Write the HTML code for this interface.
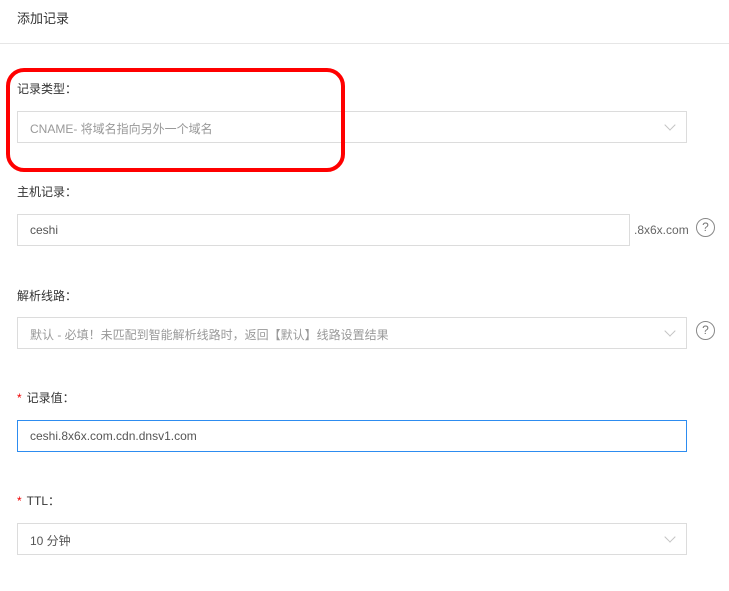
<!DOCTYPE html>
<html><head><meta charset="utf-8"><style>
body{margin:0;width:729px;height:591px;background:#fff;font-family:"Liberation Sans","Noto Sans CJK SC",sans-serif;font-size:12px;color:#333;position:relative;overflow:hidden}
.a{position:absolute}
.box{position:absolute;left:17px;width:668px;height:30px;border:1px solid #dcdcdc;background:#fff}
.box span{position:absolute;left:12px;top:8px;color:#999}
.lbl{position:absolute;left:17px}
.chev{position:absolute;right:12px;top:9px;width:7px;height:7px;border-right:1px solid #c4c4c4;border-bottom:1px solid #c4c4c4;transform:rotate(45deg)}
.q{position:absolute;width:17px;height:17px;border:1.2px solid #888;border-radius:50%;color:#777;font-size:12px;text-align:center;line-height:17px}
.req{color:#e00;margin-right:5px}
</style></head><body>
<div class="a" style="left:17px;top:8px;font-size:13px">添加记录</div>
<div class="a" style="left:0;top:43px;width:729px;height:1px;background:#e6e6e6"></div>

<div class="lbl" style="top:80px">记录类型：</div>
<div class="box" style="top:111px"><span>CNAME- 将域名指向另外一个域名</span><div class="chev"></div></div>
<div class="a" style="left:6px;top:68px;width:331px;height:96px;border:4px solid #f00;border-radius:18px"></div>

<div class="lbl" style="top:183px">主机记录：</div>
<div class="box" style="top:214px;width:611px"><span style="color:#555">ceshi</span></div>
<div class="a" style="left:634px;top:223px;color:#666">.8x6x.com</div>
<div class="q" style="left:696px;top:218px">?</div>

<div class="lbl" style="top:287px">解析线路：</div>
<div class="box" style="top:317px"><span>默认 - 必填！未匹配到智能解析线路时，返回【默认】线路设置结果</span><div class="chev"></div></div>
<div class="q" style="left:696px;top:321px">?</div>

<div class="lbl" style="top:389px"><span class="req">*</span>记录值：</div>
<div class="box" style="top:420px;border-color:#2d8cf0"><span style="color:#555">ceshi.8x6x.com.cdn.dnsv1.com</span></div>

<div class="lbl" style="top:492px"><span class="req">*</span>TTL：</div>
<div class="box" style="top:523px"><span style="color:#555">10 分钟</span><div class="chev"></div></div>
</body></html>
